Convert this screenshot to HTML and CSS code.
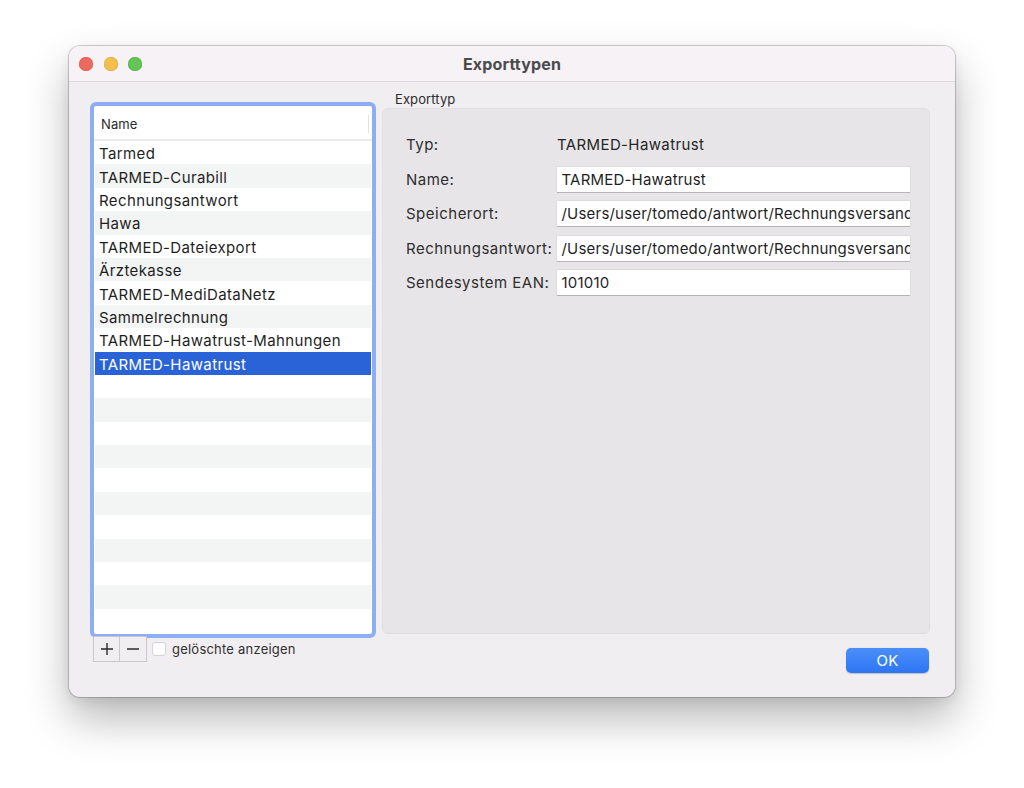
FILE: index.html
```html
<!DOCTYPE html>
<html lang="de">
<head>
<meta charset="utf-8">
<title>Exporttypen</title>
<link rel="stylesheet" href="styles.css">
</head>
<body>
<div class="window">
  <div class="titlebar">
    <div class="lights">
      <span class="light red"></span>
      <span class="light yellow"></span>
      <span class="light green"></span>
    </div>
    <div class="title">Exporttypen</div>
  </div>
  <div class="content">
    <div class="left">
      <div class="list">
        <div class="list-header"><span class="hname">Name</span><span class="hsep"></span></div>
        <div class="rows">
          <div class="row">Tarmed</div>
          <div class="row">TARMED-Curabill</div>
          <div class="row">Rechnungsantwort</div>
          <div class="row">Hawa</div>
          <div class="row">TARMED-Dateiexport</div>
          <div class="row">Ärztekasse</div>
          <div class="row">TARMED-MediDataNetz</div>
          <div class="row">Sammelrechnung</div>
          <div class="row">TARMED-Hawatrust-Mahnungen</div>
          <div class="row selected">TARMED-Hawatrust</div>
          <div class="row"></div>
          <div class="row"></div>
          <div class="row"></div>
          <div class="row"></div>
          <div class="row"></div>
          <div class="row"></div>
          <div class="row"></div>
          <div class="row"></div>
          <div class="row"></div>
          <div class="row"></div>
          <div class="row"></div>
        </div>
      </div>
      <div class="controls">
        <div class="seg">
          <button class="segbtn" type="button"><svg width="14" height="14" viewBox="0 0 14 14"><path d="M7 1v12M1 7h12" stroke="#2b2b2b" stroke-width="1.4" fill="none"/></svg></button>
          <button class="segbtn" type="button"><svg width="14" height="14" viewBox="0 0 14 14"><path d="M1 7h12" stroke="#2b2b2b" stroke-width="1.4" fill="none"/></svg></button>
        </div>
        <label class="check"><span class="box"></span><span class="check-label">gelöschte anzeigen</span></label>
      </div>
    </div>
    <div class="right">
      <div class="group-label">Exporttyp</div>
      <div class="group">
        <div class="form">
          <div class="flabel">Typ:</div>
          <div class="fvalue">TARMED-Hawatrust</div>
          <div class="flabel">Name:</div>
          <div class="field">TARMED-Hawatrust</div>
          <div class="flabel">Speicherort:</div>
          <div class="field">/Users/user/tomedo/antwort/Rechnungsversand</div>
          <div class="flabel">Rechnungsantwort:</div>
          <div class="field">/Users/user/tomedo/antwort/Rechnungsversand</div>
          <div class="flabel">Sendesystem EAN:</div>
          <div class="field">101010</div>
        </div>
      </div>
      <div class="actions">
        <button class="ok" type="button">OK</button>
      </div>
    </div>
  </div>
</div>
</body>
</html>
```

FILE: styles.css
```css
* { box-sizing: border-box; }

html, body {
  margin: 0;
  padding: 0;
  background: #ffffff;
}

body {
  width: 1024px;
  height: 788px;
  overflow: hidden;
  font-family: "Inter", "Noto Sans", "Liberation Sans", sans-serif;
  color: #262626;
}

.window {
  margin: 46px 0 0 69px;
  width: 886px;
  height: 651px;
  border-radius: 11px;
  background: #f0eef1;
  box-shadow: 0 0 0 1px rgba(0, 0, 0, 0.18), 0 22px 44px rgba(0, 0, 0, 0.28), 0 4px 12px rgba(0, 0, 0, 0.08);
  overflow: hidden;
  display: flex;
  flex-direction: column;
}

.titlebar {
  height: 36px;
  flex: none;
  background: #f6f2f6;
  border-bottom: 1px solid #dcd9dc;
  position: relative;
  display: flex;
  align-items: center;
  justify-content: center;
}

.lights {
  position: absolute;
  left: 10px;
  top: 11px;
  display: flex;
  gap: 10.5px;
}

.light {
  width: 14px;
  height: 14px;
  border-radius: 50%;
  display: block;
}
.red { background: #ee6a5f; box-shadow: inset 0 0 0 0.5px #d8584d; }
.yellow { background: #f5bf4f; box-shadow: inset 0 0 0 0.5px #d9a23b; }
.green { background: #62c555; box-shadow: inset 0 0 0 0.5px #4ea844; }

.title {
  font-size: 16px;
  font-weight: 700;
  color: #4b4a4c;
  letter-spacing: 0.15px;
}

.content {
  flex: 1;
  display: grid;
  grid-template-columns: 286px 1fr;
  column-gap: 6px;
  padding: 10px 25px 0 21px;
}

.left {
  padding-top: 10px;
  display: flex;
  flex-direction: column;
}

.list {
  height: 536px;
  border: 4px solid #8eaef3;
  border-radius: 6px;
  background: #ffffff;
  overflow: hidden;
}

.list-header {
  height: 35px;
  border-bottom: 2px solid #ebebeb;
  display: flex;
  align-items: center;
  justify-content: space-between;
  padding: 2px 3px 0 7px;
}

.hname {
  font-size: 13px;
  color: #2a2a2a;
  letter-spacing: 0.1px;
}

.hsep {
  width: 1px;
  height: 18px;
  background: #e2e2e2;
}

.rows {
  margin: 0 1.5px 0 1px;
}

.row {
  height: 23.4px;
  display: flex;
  align-items: center;
  padding: 2px 0 0 4px;
  font-size: 15px;
  letter-spacing: 0.38px;
  color: #1f1f1f;
  white-space: nowrap;
}

.row:nth-child(even) {
  background: #f3f4f4;
}

.row.selected {
  background: #2a63d8;
  color: #ffffff;
}

.controls {
  margin: -2px 0 0 3px;
  display: flex;
  align-items: center;
  gap: 5px;
}

.seg {
  display: flex;
}

.segbtn {
  width: 27px;
  height: 26px;
  padding: 0;
  margin: 0;
  border: 1px solid #c9c7ca;
  background: #f0eef1;
  display: flex;
  align-items: center;
  justify-content: center;
}

.segbtn + .segbtn {
  border-left: none;
}

.check {
  display: flex;
  align-items: center;
  gap: 6px;
}

.box {
  width: 14px;
  height: 14px;
  border-radius: 3px;
  border: 1px solid #d5d3d6;
  background: #ffffff;
}

.check-label {
  font-size: 13px;
  letter-spacing: 0.22px;
  color: #303030;
}

.right {
  display: flex;
  flex-direction: column;
}

.group-label {
  height: 16px;
  padding-left: 13px;
  font-size: 13px;
  line-height: 14px;
  letter-spacing: 0.1px;
  color: #2c2c2c;
}

.group {
  height: 526px;
  background: #e7e5e8;
  border: 1px solid #e0dee1;
  border-radius: 6px;
  padding: 23px 19px 0 23px;
}

.form {
  display: grid;
  grid-template-columns: 151px 1fr;
  grid-auto-rows: 25px;
  row-gap: 9.5px;
  align-items: center;
}

.flabel {
  font-size: 15px;
  letter-spacing: 0.5px;
  color: #2e2e2e;
  white-space: nowrap;
}

.fvalue {
  font-size: 15px;
  letter-spacing: 0.38px;
  color: #262626;
}

.field {
  height: 25px;
  line-height: 26px;
  background: #ffffff;
  padding-left: 4.5px;
  font-size: 15px;
  letter-spacing: 0.2px;
  color: #1f1f1f;
  white-space: nowrap;
  overflow: hidden;
  box-shadow: 0 0 0 0.5px rgba(0, 0, 0, 0.08), 0 1px 0 rgba(0, 0, 0, 0.18);
}

.actions {
  display: flex;
  justify-content: flex-end;
  padding: 14px 1px 0 0;
}

.ok {
  width: 83px;
  height: 25px;
  border: none;
  border-radius: 5px;
  background: linear-gradient(#4a8ff8, #2f75f4);
  box-shadow: 0 0.5px 1px rgba(0, 0, 0, 0.2);
  color: #ffffff;
  font-family: "Inter", "Noto Sans", "Liberation Sans", sans-serif;
  font-size: 15px;
  letter-spacing: 0.3px;
  padding: 0;
}
```
